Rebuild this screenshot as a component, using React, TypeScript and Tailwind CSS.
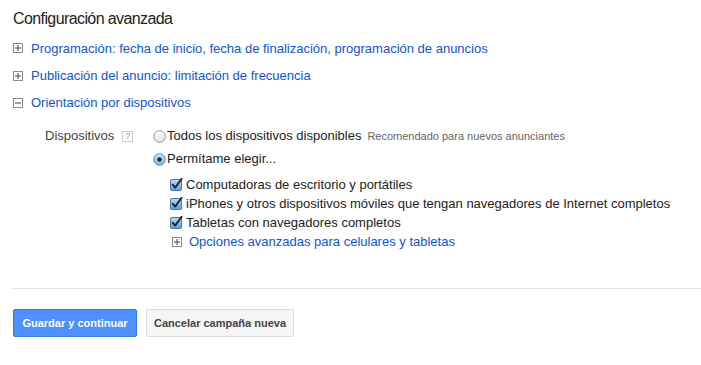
import React from 'react';

const font = { fontFamily: '"Liberation Sans", Arial, sans-serif' };

function ToggleBox({ open }: { open?: boolean }) {
  return (
    <svg width="10" height="10" viewBox="0 0 10 10" className="shrink-0">
      <rect x="0.5" y="0.5" width="9" height="9" fill="#fff" stroke="#8c8c8c" />
      <path d="M2 5h6" stroke="#444" strokeWidth="1" />
      {!open && <path d="M5 2v6" stroke="#444" strokeWidth="1" />}
    </svg>
  );
}

function Radio({ checked }: { checked?: boolean }) {
  return (
    <svg width="13" height="13" viewBox="0 0 13 13" className="shrink-0">
      <defs>
        <linearGradient id={checked ? 'rg-on' : 'rg-off'} x1="0" y1="0" x2="0" y2="1">
          <stop offset="0" stopColor={checked ? '#cfe4fb' : '#ffffff'} />
          <stop offset="1" stopColor={checked ? '#7fb3ea' : '#e4e4e4'} />
        </linearGradient>
      </defs>
      <circle cx="6.5" cy="6.5" r="5.8" fill={`url(#${checked ? 'rg-on' : 'rg-off'})`} stroke={checked ? '#4a7fb8' : '#8a8a8a'} strokeWidth="0.9" />
      {checked && <circle cx="6.5" cy="6.5" r="2.2" fill="#1d2a3a" />}
    </svg>
  );
}

function Check() {
  return (
    <svg width="13" height="13" viewBox="0 0 13 13" className="shrink-0">
      <defs>
        <linearGradient id="cb" x1="0" y1="0" x2="0" y2="1">
          <stop offset="0" stopColor="#b9d8f7" />
          <stop offset="1" stopColor="#5d9ee0" />
        </linearGradient>
      </defs>
      <rect x="0.5" y="1.5" width="11" height="11" rx="1.5" fill="url(#cb)" stroke="#4b79a8" />
      <path d="M2.8 6.8 L5.2 9.6 L11.6 0.8" fill="none" stroke="#1b2430" strokeWidth="1.9" strokeLinecap="round" strokeLinejoin="round" />
    </svg>
  );
}

const sections = [
  { label: 'Programación: fecha de inicio, fecha de finalización, programación de anuncios', open: false },
  { label: 'Publicación del anuncio: limitación de frecuencia', open: false },
  { label: 'Orientación por dispositivos', open: true },
];

const devices = [
  'Computadoras de escritorio y portátiles',
  'iPhones y otros dispositivos móviles que tengan navegadores de Internet completos',
  'Tabletas con navegadores completos',
];

export default function App() {
  return (
    <div className="w-[701px] h-[365px] bg-white pl-[13px] pt-[10px] text-[13px] text-[#222]" style={font}>
      <h2 className="h-[18px] leading-[18px] text-[16px] tracking-[-0.6px] font-normal text-[#222]">Configuración avanzada</h2>

      <div className="mt-[6px]">
        {sections.map((s, i) => (
          <div key={s.label} className={`flex items-center gap-[8px] ${i === 0 ? 'h-[28px]' : 'h-[27px]'}`}>
            <ToggleBox open={s.open} />
            <a className="text-[#15c] leading-none">{s.label}</a>
          </div>
        ))}
      </div>

      {/* Orientación por dispositivos */}
      <div className="flex mt-[10px]">
        <div className="w-[140px] pl-[32px] flex items-start">
          <div className="h-[20px] flex items-center gap-[8px] text-[#444]">
            <span>Dispositivos</span>
            <span className="w-[11px] h-[11px] border border-[#ccc] text-[9px] leading-[9px] text-[#999] flex items-center justify-center">?</span>
          </div>
        </div>
        <div className="flex flex-col">
          <div className="h-[20px] flex items-center">
            <Radio />
            <span className="ml-[1px]">Todos los dispositivos disponibles</span>
            <span className="ml-[6px] text-[11px] text-[#666]">Recomendado para nuevos anunciantes</span>
          </div>
          <div className="h-[20px] mt-[3px] flex items-center">
            <Radio checked />
            <span className="ml-[1px]">Permítame elegir...</span>
          </div>
          <div className="mt-[6px] pl-[17px]">
            {devices.map((d) => (
              <div key={d} className="h-[19px] flex items-center">
                <Check />
                <span className="ml-[3px]">{d}</span>
              </div>
            ))}
            <div className="h-[20px] flex items-center pl-[2px] gap-[7px]">
              <ToggleBox />
              <a className="text-[#15c]">Opciones avanzadas para celulares y tabletas</a>
            </div>
          </div>
        </div>
      </div>

      <div className="mt-[36px] border-t border-[#e0e0e0]" />

      <div className="flex gap-[9px] mt-[20px]">
        <button className="h-[28px] w-[124px] rounded-[2px] border border-[#3079ed] bg-[#4d90fe] text-white text-[11px] font-bold">
          Guardar y continuar
        </button>
        <button className="h-[28px] w-[148px] rounded-[2px] border border-[#dcdcdc] bg-[#f5f5f5] text-[#444] text-[11px] font-bold">
          Cancelar campaña nueva
        </button>
      </div>
    </div>
  );
}
